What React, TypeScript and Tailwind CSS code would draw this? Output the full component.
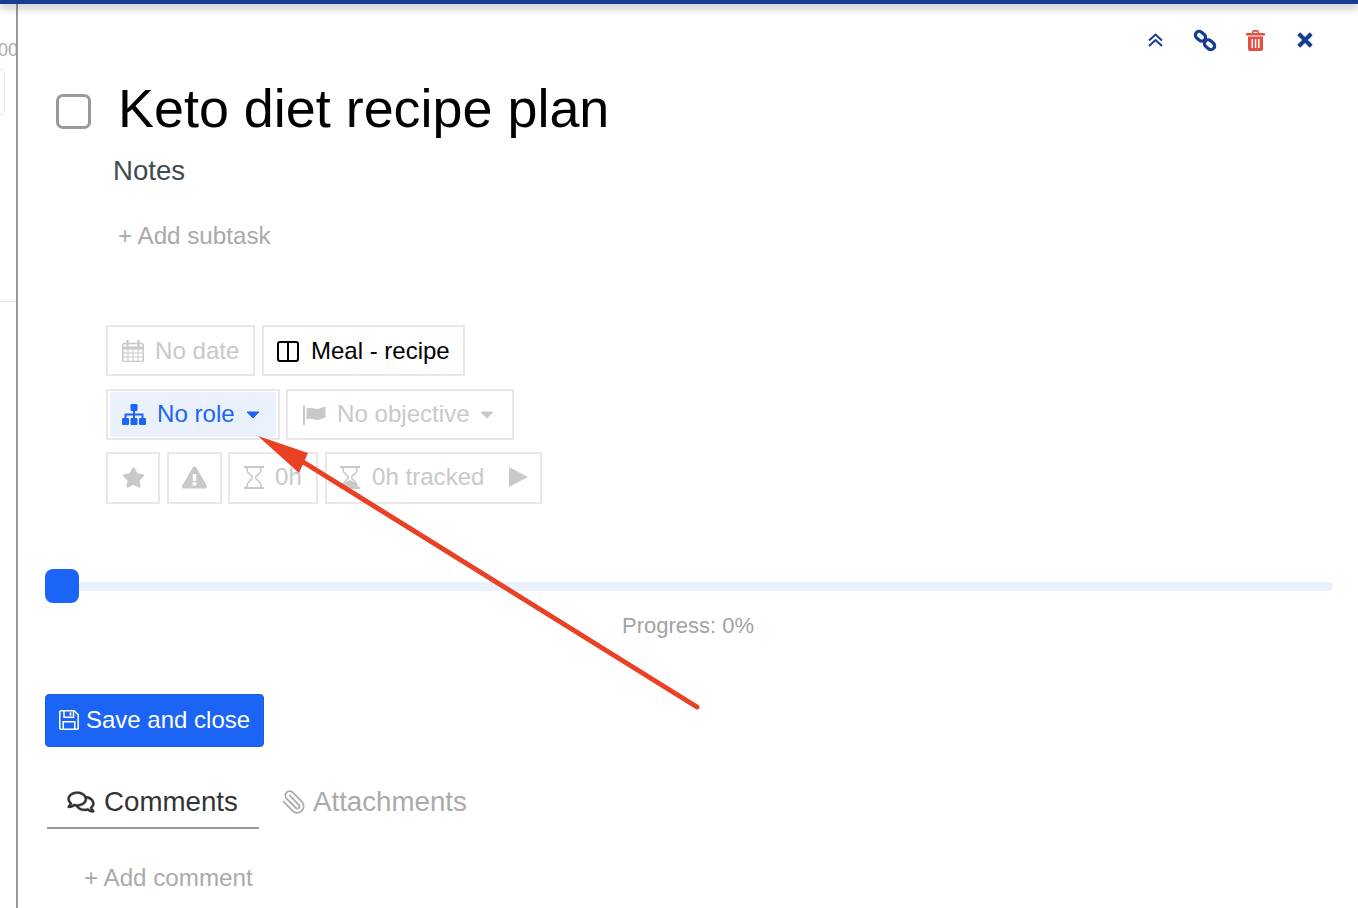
import { FaExclamationTriangle, FaRegComments, FaStar } from 'react-icons/fa';
import { Paperclip } from 'lucide-react';

const boxClass =
  'flex h-full items-center border-2 border-[#e8e8e8] text-[24.1px] text-[#c9c9c9] whitespace-nowrap';

const ColumnsIcon = () => (
  <svg width="22" height="21" viewBox="0 0 22 21" fill="none" stroke="#000" strokeWidth="2">
    <rect x="1" y="1" width="20" height="19" rx="2" />
    <line x1="11" y1="1" x2="11" y2="20" />
  </svg>
);

const CalendarIcon = () => (
  <svg width="22" height="22" viewBox="0 0 22 22" fill="none" stroke="currentColor">
    <rect x="0.75" y="3.5" width="20.5" height="18" rx="1.5" strokeWidth="1.5" />
    <path d="M1 8h20" strokeWidth="3" />
    <path d="M1 13h20M1 17h20M6 8v13M11 8v13M16 8v13" strokeWidth="1" />
    <path d="M5.5 1v5M16.5 1v5" strokeWidth="2.2" strokeLinecap="round" />
  </svg>
);

const SitemapIcon = () => (
  <svg width="24" height="21" viewBox="0 0 24 21" fill="currentColor">
    <rect x="8.5" y="0" width="7" height="7" rx="1.2" />
    <rect x="0" y="14" width="7" height="7" rx="1.2" />
    <rect x="8.5" y="14" width="7" height="7" rx="1.2" />
    <rect x="17" y="14" width="7" height="7" rx="1.2" />
    <path d="M11 6h2v3.5h8.5V15h-2v-3.500h-6.500V15h-2v-3.500H4.500V15h-2V9.500H11z" />
  </svg>
);

const Caret = () => (
  <svg width="14" height="8" viewBox="0 0 14 8" fill="currentColor" stroke="currentColor" strokeLinejoin="round">
    <path d="M1 1h12L7 7z" />
  </svg>
);

const FlagIcon = () => (
  <svg width="23" height="20" viewBox="0 0 23 20" fill="currentColor">
    <rect x="0" y="0" width="2" height="20" rx="1" />
    <path d="M3.500 3.500C8 1 12 5 16 3.500c2.500-.8 4.500-1.500 6.500-2v11c-2 .8-4 1.700-6.500 2.300-4 1-8-2.300-12.500-.3z" />
  </svg>
);

const HourglassIcon = ({ filled = false }: { filled?: boolean }) => (
  <svg width="20" height="23" viewBox="0 0 20 23" fill="none" stroke="currentColor" strokeWidth="1.600">
    <path d="M0 1h20M0 22h20" strokeWidth="2" />
    <path d="M3 1v3c0 4 5.500 5 5.500 7.500S3 15 3 19v3M17 1v3c0 4-5.500 5-5.500 7.500S17 15 17 19v3" />
    {filled && <path d="M3 22v-3c1-2 4-4 7-5 3 1 6 3 7 5v3z" fill="currentColor" stroke="none" />}
  </svg>
);

const SaveIcon = () => (
  <svg width="20" height="20" viewBox="0 0 20 20" fill="none" stroke="#fff" strokeWidth="1.500">
    <path d="M1.800.8h13.500l3.900 3.900v13.500a1 1 0 0 1-1 1H1.800a1 1 0 0 1-1-1V1.800a1 1 0 0 1 1-1z" />
    <path d="M5 .8v6.400h9.500V.8M4.200 19.200v-7.400h11.600v7.400" />
    <path d="M11.500 2.300v3.300" strokeWidth="1.800" />
  </svg>
);

const App = () => {
  return (
    <div className="relative flex h-[908px] w-full overflow-hidden bg-white font-['Liberation_Sans',Arial,sans-serif]">
      {/* page behind the modal */}
      <div className="flex w-[18px] shrink-0 flex-col items-end overflow-hidden border-r-2 border-[#999] pt-[38px]">
        <span className="mr-[-2px] text-[18px] leading-[24px] text-[#aaa]">00</span>
        <div className="mt-[7px] ml-[-18px] h-[46px] w-[23px] shrink-0 self-start border border-[#eee]" />
        <div className="mt-[186px] h-px w-full bg-[#e5e5e5]" />
      </div>

      {/* modal */}
      <div className="flex min-w-0 flex-1 flex-col">
        <div className="flex h-[78px] items-center justify-end pt-[2px] pr-[28px]">
          <div className="flex w-[50px] justify-center text-[#143d8f]">
            <svg width="15" height="14" viewBox="0 0 15 14" fill="none" stroke="currentColor" strokeWidth="2">
              <path d="M1 7.500l6.500-6 6.500 6M1 13l6.500-6 6.500 6" />
            </svg>
          </div>
          <div className="flex w-[50px] justify-center text-[#143d8f]">
            <svg width="24" height="23" viewBox="0 0 24 23" fill="none" stroke="currentColor" strokeWidth="3.200">
              <rect x="2" y="3.500" width="11" height="7.500" rx="3.700" transform="rotate(40 7.500 7.200)" />
              <rect x="11" y="12" width="11" height="7.500" rx="3.700" transform="rotate(40 16.500 15.800)" />
            </svg>
          </div>
          <div className="flex w-[50px] justify-center text-[#e2503f]">
            <svg width="19" height="21" viewBox="0 0 19 21" fill="currentColor">
              <path d="M6 3V2a2 2 0 0 1 2-2h3a2 2 0 0 1 2 2v1h5a1 1 0 0 1 1 1v1.500H0V4a1 1 0 0 1 1-1zm1.700 0h3.600V1.800H7.700z" />
              <path fillRule="evenodd" d="M2 6.500h15V19a2 2 0 0 1-2 2H4a2 2 0 0 1-2-2zM5.500 9v9H7V9zm3.300 0v9h1.500V9zm3.300 0v9h1.500V9z" />
            </svg>
          </div>
          <div className="flex w-[50px] justify-center text-[#143d8f]">
            <svg width="16" height="16" viewBox="0 0 16 16" fill="currentColor">
              <path d="M3.200 0.300L8 5.100 12.800 0.300 15.700 3.200 10.900 8l4.800 4.800-2.900 2.900L8 10.900l-4.800 4.800-2.900-2.900L5.100 8 0.300 3.200z" />
            </svg>
          </div>
        </div>

        <div className="flex h-[60px] items-center pl-[38px]">
          <div className="mt-[6px] h-[35px] w-[35px] shrink-0 rounded-[7px] border-[3px] border-[#999]" />
          <h1 className="ml-[27px] text-[53.9px] leading-[60px] font-normal text-black">Keto diet recipe plan</h1>
        </div>

        <div className="mt-[15px] pl-[95px] text-[27.6px] leading-[36px] text-[#3f4a52]">Notes</div>
        <div className="mt-[31px] pl-[100px] text-[24.2px] leading-[32px] text-[#a9a9a9]">+ Add subtask</div>

        <div className="mt-[73px] flex flex-col pl-[88px]">
          <div className="flex h-[51px] gap-[7px]">
            <div className={`${boxClass} w-[149px] pt-px pl-[14px]`}>
              <CalendarIcon />
              <span className="ml-[11px]">No date</span>
            </div>
            <div className={`${boxClass} w-[203px] pt-px pl-[13px] !text-[24px]`}>
              <ColumnsIcon />
              <span className="ml-[12px] text-black">Meal - recipe</span>
            </div>
          </div>

          <div className="mt-[13px] flex h-[51px] gap-[6px]">
            <div className="h-full w-[174px] border-2 border-[#e8e8e8] px-[2px] py-px">
              <div className="flex h-full items-center rounded-[3px] bg-[#eaf1fd] pl-[12px] text-[24.1px] whitespace-nowrap text-[#1c64f5]">
                <SitemapIcon />
                <span className="ml-[11px]">No role</span>
                <span className="ml-[11px] flex">
                  <Caret />
                </span>
              </div>
            </div>
            <div className={`${boxClass} w-[228px] pl-[15px]`}>
              <FlagIcon />
              <span className="ml-[11px]">No objective</span>
              <span className="ml-[10px] flex">
                <Caret />
              </span>
            </div>
          </div>

          <div className="mt-[12px] flex h-[52px]">
            <div className={`${boxClass} w-[54px] justify-center pb-[2px]`}>
              <FaStar className="h-[21px] w-[23px]" />
            </div>
            <div className={`${boxClass} ml-[7px] w-[55px] justify-center pb-[2px]`}>
              <FaExclamationTriangle className="h-[23px] w-[25px]" />
            </div>
            <div className={`${boxClass} ml-[6px] w-[90px] pb-[2px] pl-[14px]`}>
              <HourglassIcon />
              <span className="ml-[11px]">0h</span>
            </div>
            <div className={`${boxClass} ml-[7px] w-[217px] pb-[2px] pl-[13px]`}>
              <HourglassIcon filled />
              <span className="ml-[12px]">0h tracked</span>
              <svg className="ml-[24px]" width="19" height="20" viewBox="0 0 19 20" fill="currentColor">
                <path d="M0 0l19 10L0 20z" />
              </svg>
            </div>
          </div>
        </div>

        <div className="relative mt-[78px] ml-[27px] h-[9px] w-[1288px] rounded-full bg-[#eaf1fd]">
          <div className="absolute top-[-13px] left-0 h-[34px] w-[34px] rounded-[8px] bg-[#1c64f5]" />
        </div>
        <div className="mt-[21px] w-[1340px] text-center text-[22px] leading-[28px] text-[#a3a3a3]">Progress: 0%</div>

        <button className="mt-[54px] ml-[27px] flex h-[53px] w-[219px] items-center rounded-[4px] border border-[#1a5adb] bg-[#1c64f5] pb-[2px] pl-[13px] text-[24px] text-white">
          <SaveIcon />
          <span className="ml-[7px]">Save and close</span>
        </button>

        <div className="mt-[34px] ml-[29px] flex">
          <div className="flex h-[48px] w-[212px] items-start border-b-2 border-[#999] pl-[20px] text-[27.7px] leading-[42px] text-[#333]">
            <FaRegComments className="mt-[9px] h-[24px] w-[28px] stroke-[6px]" />
            <span className="ml-[9px]">Comments</span>
          </div>
          <div className="ml-[22px] flex items-start text-[27.7px] leading-[42px] text-[#aaa]">
            <Paperclip className="mt-[8px] -scale-x-100" size={26} strokeWidth={1.6} />
            <span className="ml-[6px]">Attachments</span>
          </div>
        </div>

        <div className="mt-[33px] pl-[66px] text-[24.2px] leading-[32px] text-[#aaa]">+ Add comment</div>
      </div>

      {/* top bar of the modal */}
      <div className="absolute inset-x-0 top-0 h-[4px] bg-[#143d8f] shadow-[0_3px_8px_rgba(0,0,0,0.4)]" />

      {/* annotation arrow */}
      <svg className="pointer-events-none absolute top-0 left-0" width="1358" height="908" viewBox="0 0 1358 908">
        <line x1="697" y1="707" x2="300" y2="460" stroke="#ea4125" strokeWidth="5" strokeLinecap="round" />
        <polygon points="258,436 308,453 299,473" fill="#ea4125" />
      </svg>
    </div>
  );
};

export default App;
